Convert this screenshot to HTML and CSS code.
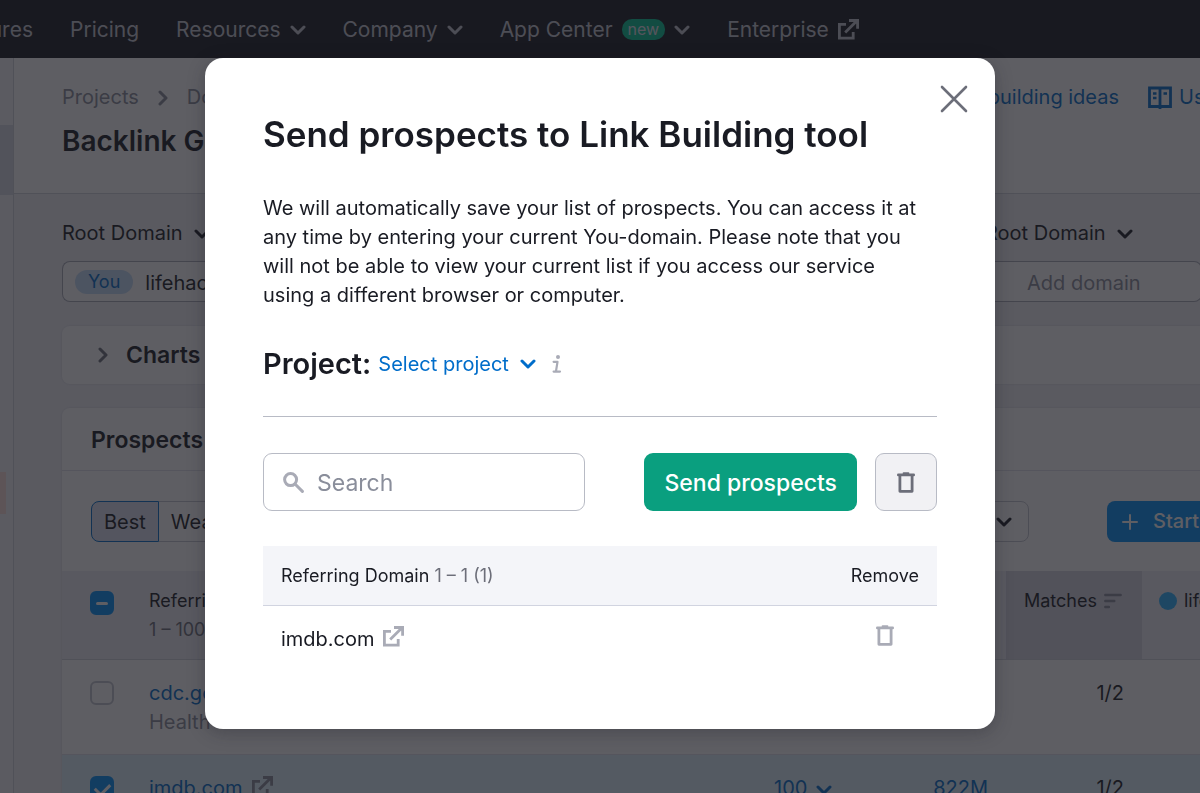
FILE: index.html
```html
<!DOCTYPE html>
<html lang="en">
<head>
    <meta charset="UTF-8">
    <meta name="viewport" content="width=device-width, initial-scale=1.0">
    <title>Backlink Gap</title>
    <link rel="stylesheet" href="styles.css">
</head>
<body>
    <!-- shared icons -->
    <svg class="sprite" aria-hidden="true">
        <symbol id="chevron-down" viewBox="0 0 16 10">
            <path d="M2 2l6 6 6-6" fill="none" stroke="currentColor" stroke-width="3" stroke-linecap="round" stroke-linejoin="round"/>
        </symbol>
        <symbol id="chevron-right" viewBox="0 0 10 16">
            <path d="M2 2l6 6-6 6" fill="none" stroke="currentColor" stroke-width="3" stroke-linecap="round" stroke-linejoin="round"/>
        </symbol>
        <symbol id="external" viewBox="0 0 21 21">
            <path d="M8 5.4H1.4v13.8h13.8V13" fill="none" stroke="currentColor" stroke-width="2.8"/>
            <path d="M7.2 13.6L19 1.8M11 1.5h8.6v8.2" fill="none" stroke="currentColor" stroke-width="2.8"/>
        </symbol>
        <symbol id="trash" viewBox="0 0 18 21">
            <path d="M1.3 2.9h15.4" stroke="currentColor" stroke-width="2.6" stroke-linecap="round"/>
            <path d="M6.6 1.3h4.8" stroke="currentColor" stroke-width="2" stroke-linecap="round"/>
            <path d="M2.9 3.5v15.8h12.2V3.5" fill="none" stroke="currentColor" stroke-width="2.8" stroke-linejoin="round"/>
        </symbol>
    </svg>

    <div class="app">
        <nav class="navbar">
            <a href="#">Features</a>
            <a href="#">Pricing</a>
            <a href="#">Resources <svg class="chevron"><use href="#chevron-down"/></svg></a>
            <a href="#">Company <svg class="chevron"><use href="#chevron-down"/></svg></a>
            <a href="#">App Center <span class="badge">new</span> <svg class="chevron"><use href="#chevron-down"/></svg></a>
            <a href="#">Enterprise <svg class="external"><use href="#external"/></svg></a>
        </nav>

        <div class="layout">
            <aside class="sidebar">
                <div class="sidebar-active"></div>
                <div class="sidebar-mark"></div>
            </aside>

            <main class="page">
                <header class="page-header">
                    <div>
                        <div class="breadcrumbs">
                            <a href="#">Projects</a>
                            <svg class="chevron-side"><use href="#chevron-right"/></svg>
                            <a href="#">Domain</a>
                        </div>
                        <h1>Backlink Gap</h1>
                    </div>
                    <div class="header-links">
                        <a href="#">Link building ideas</a>
                        <a class="manual" href="#">
                            <svg class="book" viewBox="0 0 24 24">
                                <path d="M1.5 2h21v18.5h-21zM12 2v21" fill="none" stroke="currentColor" stroke-width="2.8"/>
                                <path d="M5 7.5h3.5M5 12h3.5M15.5 7.5H19" stroke="currentColor" stroke-width="2.6"/>
                            </svg>
                            User manual
                        </a>
                    </div>
                </header>

                <div class="content">
                    <div class="domains">
                        <div class="domain">
                            <button class="domain-type">Root Domain <svg class="chevron"><use href="#chevron-down"/></svg></button>
                            <div class="domain-box domain-box-first">
                                <span class="you">You</span>
                                <input type="text" value="lifehacker.com" aria-label="Your domain">
                            </div>
                        </div>
                        <div class="domain domain-last">
                            <button class="domain-type">Root Domain <svg class="chevron"><use href="#chevron-down"/></svg></button>
                            <div class="domain-box domain-box-last">
                                <input type="text" placeholder="Add domain" aria-label="Competitor domain">
                            </div>
                        </div>
                    </div>

                    <section class="card charts">
                        <svg class="chevron-side"><use href="#chevron-right"/></svg>
                        <h2>Charts</h2>
                    </section>

                    <section class="card">
                        <h2 class="card-title">Prospects</h2>
                        <div class="filters">
                            <div class="tabs">
                                <button class="tab active">Best</button>
                                <button class="tab">Weak</button>
                            </div>
                            <button class="filter">Filter <svg class="chevron"><use href="#chevron-down"/></svg></button>
                            <button class="start">
                                <svg class="plus" viewBox="0 0 16 16"><path d="M8 1v14M1 8h14" stroke="currentColor" stroke-width="2" stroke-linecap="round"/></svg>
                                Start outreach
                            </button>
                        </div>
                        <table class="prospects">
                            <colgroup>
                                <col class="col-check">
                                <col>
                                <col class="col-score">
                                <col class="col-visits">
                                <col class="col-matches">
                                <col class="col-site">
                            </colgroup>
                            <thead>
                                <tr>
                                    <th><input type="checkbox" class="some" aria-label="Select all"></th>
                                    <th>Referring Domain<div class="range">1 – 100</div></th>
                                    <th></th>
                                    <th></th>
                                    <th class="sorted">
                                        <span class="sort">Matches
                                            <svg viewBox="0 0 18 16"><path d="M1.3 2h15.4M1.3 8h9M1.3 14h3.6" stroke="currentColor" stroke-width="2.4" stroke-linecap="round"/></svg>
                                        </span>
                                    </th>
                                    <th><span class="site"><i class="dot"></i>lifehacker.com</span></th>
                                </tr>
                            </thead>
                            <tbody>
                                <tr>
                                    <td><input type="checkbox" aria-label="cdc.gov"></td>
                                    <td><a href="#">cdc.gov</a><div class="topic">Health</div></td>
                                    <td></td>
                                    <td></td>
                                    <td class="number">1/2</td>
                                    <td></td>
                                </tr>
                                <tr class="selected">
                                    <td><input type="checkbox" checked aria-label="imdb.com"></td>
                                    <td><a href="#">imdb.com <svg class="external"><use href="#external"/></svg></a></td>
                                    <td class="number"><a href="#">100 <svg class="chevron"><use href="#chevron-down"/></svg></a></td>
                                    <td class="number"><a href="#">822M</a></td>
                                    <td class="number">1/2</td>
                                    <td></td>
                                </tr>
                            </tbody>
                        </table>
                    </section>
                </div>
            </main>
        </div>
    </div>

    <div class="overlay">
        <div class="modal" role="dialog" aria-labelledby="modalTitle">
            <button class="close" aria-label="Close">
                <svg viewBox="0 0 28 28"><path d="M2 2l24 24M26 2L2 26" stroke="currentColor" stroke-width="2.6" stroke-linecap="round"/></svg>
            </button>
            <h2 id="modalTitle">Send prospects to Link Building tool</h2>
            <p>We will automatically save your list of prospects. You can access it at any time by entering your current You-domain. Please note that you will not be able to view your current list if you access our service using a different browser or computer.</p>

            <div class="project">
                <strong>Project:</strong>
                <button class="project-select">Select project <svg class="chevron"><use href="#chevron-down"/></svg></button>
                <svg class="info" viewBox="0 0 10 18">
                    <circle cx="6" cy="2" r="2" fill="currentColor"/>
                    <path d="M1.6 6.8h3.9L4 16.2M1.6 16.6h6.4" fill="none" stroke="currentColor" stroke-width="2.2" stroke-linecap="round" stroke-linejoin="round"/>
                </svg>
            </div>

            <div class="actions">
                <div class="search">
                    <svg viewBox="0 0 21 21">
                        <circle cx="7.6" cy="7.6" r="6" fill="none" stroke="currentColor" stroke-width="3"/>
                        <path d="M12 12l7.4 7.4" stroke="currentColor" stroke-width="3" stroke-linecap="round"/>
                    </svg>
                    <input type="text" placeholder="Search" aria-label="Search">
                </div>
                <button class="send">Send prospects</button>
                <button class="clear" aria-label="Remove all"><svg class="trash"><use href="#trash"/></svg></button>
            </div>

            <table class="list">
                <thead>
                    <tr>
                        <th>Referring Domain <span>1 – 1 (1)</span></th>
                        <th class="remove">Remove</th>
                    </tr>
                </thead>
                <tbody>
                    <tr>
                        <td><a href="#">imdb.com <svg class="external"><use href="#external"/></svg></a></td>
                        <td class="remove"><button aria-label="Remove imdb.com"><svg class="trash"><use href="#trash"/></svg></button></td>
                    </tr>
                </tbody>
            </table>
        </div>
    </div>
</body>
</html>
```
FILE: styles.css
```css
* {
    box-sizing: border-box;
}
body {
    margin: 0;
    height: 100vh;
    overflow: hidden;
    font-family: Inter, "Liberation Sans", sans-serif;
    font-size: 20px;
    line-height: 29px;
    color: #191b23;
    background: #f0f0f4;
}
button, input {
    font: inherit;
    color: inherit;
}
button {
    padding: 0;
    border: none;
    background: none;
    cursor: pointer;
}
input[type="text"] {
    min-width: 0;
    border: none;
    padding: 0;
    outline: none;
    background: none;
}
a {
    color: #006dca;
    text-decoration: none;
}
h1, h2, p {
    margin: 0;
}
svg {
    flex: none;
}
.sprite {
    display: none;
}
.chevron {
    width: 16px;
    height: 10px;
}
.chevron-side {
    width: 10px;
    height: 16px;
}
.external {
    width: 21px;
    height: 21px;
}
.trash {
    width: 18px;
    height: 21px;
    display: block;
}

/* Page behind the dialog, wider than the window */
.app {
    width: calc(100% + 160px);
}
.navbar {
    display: flex;
    align-items: center;
    gap: 37px;
    height: 58px;
    margin-left: -53px;
    padding-top: 1px;
    background: #17181f;
    font-size: 21px;
}
.navbar a {
    display: flex;
    align-items: center;
    gap: 9px;
    color: #c4c7cf;
}
.badge {
    padding: 0 6px;
    border-radius: 10px;
    background: #00c192;
    color: #e0e1e9;
    font-size: 16px;
    line-height: 21px;
}
.layout {
    display: flex;
}
.sidebar {
    width: 14px;
    border-right: 1px solid #d1d4db;
    background: #f4f5f9;
}
.sidebar-active {
    height: 70px;
    margin-top: 67px;
    background: #d8d9e3;
}
.sidebar-mark {
    width: 6px;
    height: 42px;
    margin-top: 277px;
    background: #fbdcd5;
}
.page {
    flex: 1;
    min-width: 0;
}
.page-header {
    display: flex;
    justify-content: space-between;
    padding: 25px 60px 34px 48px;
    border-bottom: 1px solid #d1d4db;
    background: #fff;
}
.breadcrumbs {
    display: flex;
    align-items: center;
    gap: 19px;
}
.breadcrumbs a, .breadcrumbs svg {
    color: #8a8e9b;
}
h1 {
    margin-top: 11px;
    font-size: 28px;
    line-height: 36px;
    font-weight: 600;
}
.header-links {
    display: flex;
    align-items: flex-start;
    gap: 29px;
}
.manual {
    display: flex;
    align-items: center;
    gap: 7px;
    width: 152px;
    white-space: nowrap;
}
.book {
    width: 24px;
    height: 24px;
}
.content {
    padding: 25px 48px 0;
}
.domains {
    display: flex;
    padding-right: 110px;
    margin-bottom: 24px;
}
.domain {
    flex: 1;
}
.domain-last {
    flex: none;
    width: 217px;
}
.domain-type {
    display: flex;
    align-items: center;
    gap: 11px;
    height: 29px;
    margin-bottom: 13px;
}
.domain-box {
    display: flex;
    align-items: center;
    gap: 12px;
    height: 41px;
    padding: 0 12px;
    border: 1px solid #a9abb6;
    background: #fff;
}
.domain-box input {
    margin-top: 3px;
}
.domain-box-first {
    border-right: none;
    border-radius: 8px 0 0 8px;
}
.domain-box-last {
    padding-left: 42px;
    border-left: none;
    border-radius: 0 8px 8px 0;
}
.domain-box-last input {
    width: 100%;
}
.you {
    padding: 0 13px;
    border-radius: 12px;
    background: #c4dcf7;
    color: #006dca;
    font-size: 18px;
    line-height: 24px;
}
input::placeholder {
    color: #8a8e9b;
    opacity: 1;
}
.card {
    margin-bottom: 24px;
    border-radius: 8px;
    background: #fff;
    box-shadow: 0 0 1px 1px #e6e7ec;
}
.card h2 {
    font-size: 23px;
    line-height: 30px;
    font-weight: 600;
}
.charts {
    display: flex;
    align-items: center;
    gap: 18px;
    height: 58px;
    padding-left: 36px;
}
.charts svg {
    color: #6c6e79;
}
.card .card-title {
    padding: 17px 29px 15px;
    border-bottom: 1px solid #e0e1e9;
}
.filters {
    display: flex;
    align-items: center;
    padding: 30px 29px 29px;
}
.tabs {
    display: flex;
    flex: 1;
}
.tab {
    height: 41px;
    padding: 2px 12px 0;
    border: 1px solid #c4c7cf;
    border-left: none;
}
.tab.active {
    border: 1px solid #006dca;
    border-radius: 8px 0 0 8px;
    background: #dde1f0;
}
.filter {
    display: flex;
    align-items: center;
    gap: 12px;
    height: 41px;
    margin-right: 78px;
    padding: 0 16px;
    border: 1px solid #c4c7cf;
    border-radius: 8px;
}
.start {
    display: flex;
    align-items: center;
    gap: 15px;
    width: 176px;
    height: 41px;
    padding-left: 15px;
    border-radius: 8px;
    background: #008ff8;
    color: #fff;
    font-weight: 500;
    white-space: nowrap;
}
.plus {
    width: 16px;
    height: 16px;
}
.prospects {
    width: 100%;
    table-layout: fixed;
    border-collapse: collapse;
}
.col-check {
    width: 87px;
}
.col-score {
    width: 160px;
}
.col-visits {
    width: 156px;
}
.col-matches {
    width: 136px;
}
.col-site {
    width: 170px;
}
.prospects th {
    height: 88px;
    padding: 15px 0 0;
    border-bottom: 1px solid #d1d4db;
    background: #eeeef3;
    font-size: 18px;
    font-weight: 400;
    text-align: left;
    vertical-align: top;
}
.prospects th.sorted {
    padding-left: 18px;
    background: #d6d5e1;
}
.range {
    color: #6c6e79;
}
.sort, .site {
    display: flex;
    align-items: center;
    gap: 7px;
}
.sort svg {
    width: 18px;
    height: 16px;
    color: #8a8e9b;
}
.site {
    padding-left: 17px;
}
.dot {
    width: 18px;
    height: 18px;
    border-radius: 50%;
    background: #2bb3ff;
}
.prospects td {
    height: 95px;
    padding: 19px 0 0;
    border-bottom: 1px solid #e0e1e9;
    vertical-align: top;
}
.prospects td.number {
    padding-right: 18px;
    text-align: right;
}
.prospects td .chevron {
    margin-left: 3px;
}
.prospects td .external {
    margin-left: 4px;
    color: #8a8e9b;
    vertical-align: -2px;
}
.topic {
    color: #8a8e9b;
}
.selected {
    background: #def0fc;
}
.prospects input {
    display: block;
    width: 24px;
    height: 24px;
    margin: 2px 0 0 28px;
    appearance: none;
    border: 2px solid #c4c7cf;
    border-radius: 6px;
}
.prospects th input {
    margin-top: 5px;
}
.prospects .some, .prospects input:checked {
    border-color: #008ff8;
    background: #008ff8;
}
.some::before {
    content: "";
    display: block;
    width: 12px;
    height: 3px;
    margin: 9px auto 0;
    border-radius: 2px;
    background: #fff;
}
.prospects input:checked::before {
    content: "";
    display: block;
    width: 12px;
    height: 7px;
    margin: 5px auto 0;
    border-left: 3px solid #fff;
    border-bottom: 3px solid #fff;
    transform: rotate(-45deg);
}

/* Dialog */
.overlay {
    position: fixed;
    inset: 0;
    display: flex;
    align-items: flex-start;
    justify-content: center;
    padding: 58px 24px;
    background: rgba(25, 26, 33, 0.7);
}
.modal {
    position: relative;
    width: 100%;
    max-width: 790px;
    padding: 54px 58px 58px;
    border-radius: 18px;
    background: #fff;
    box-shadow: 0 4px 18px rgba(25, 27, 35, 0.3);
}
.modal h2 {
    font-size: 35px;
    line-height: 44px;
    font-weight: 600;
}
.modal p {
    margin-top: 38px;
    padding-right: 14px;
}
.close {
    position: absolute;
    top: 27px;
    right: 27px;
    color: #6c6e79;
}
.close svg {
    display: block;
    width: 28px;
    height: 28px;
}
.project {
    display: flex;
    align-items: center;
    gap: 7px;
    margin-top: 36px;
    padding-bottom: 34px;
    border-bottom: 1px solid #b8bbc5;
}
.project strong {
    font-size: 29px;
    line-height: 36px;
    font-weight: 600;
}
.project-select {
    display: flex;
    align-items: center;
    gap: 11px;
    color: #006dca;
}
.info {
    width: 10px;
    height: 18px;
    margin-left: 9px;
    color: #a9abb6;
}
.actions {
    display: flex;
    gap: 18px;
    margin: 36px 0 35px;
}
.search {
    display: flex;
    align-items: center;
    gap: 13px;
    flex: 1;
    max-width: 322px;
    height: 58px;
    padding: 0 19px;
    border: 1px solid #b8bbc5;
    border-radius: 9px;
    font-size: 23px;
}
.search svg {
    width: 21px;
    height: 21px;
    color: #a9abb6;
}
.search input {
    width: 100%;
    margin-top: 2px;
}
.send {
    margin-left: auto;
    padding: 2px 20px 0;
    border-radius: 9px;
    background: #0a9f7f;
    color: #fff;
    font-size: 23px;
    font-weight: 500;
}
.clear {
    display: flex;
    align-items: center;
    justify-content: center;
    width: 62px;
    border: 1px solid #b8bbc5;
    border-radius: 9px;
    background: #f1f1f4;
    color: #6c6e79;
}
.list {
    width: 100%;
    border-collapse: collapse;
}
.list th {
    height: 59px;
    padding: 0 18px;
    border-bottom: 1px solid #d1d4e0;
    background: #f4f5f9;
    font-size: 18px;
    font-weight: 400;
    text-align: left;
}
.list th span {
    color: #6c6e79;
}
.list td {
    height: 66px;
    padding: 2px 18px 0;
}
.list td a {
    color: #191b23;
}
.list .external {
    margin-left: 3px;
    color: #a9abb6;
    vertical-align: -1px;
}
.list th.remove {
    width: 103px;
}
.list td.remove {
    padding-left: 43px;
    color: #a9abb6;
}
```
